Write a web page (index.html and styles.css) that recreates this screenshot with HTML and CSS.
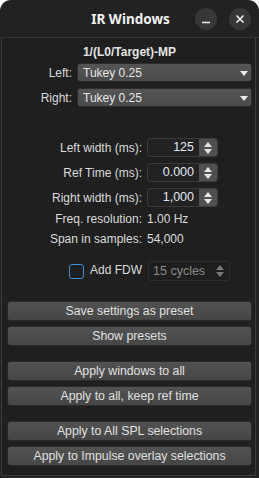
FILE: index.html
```html
<!DOCTYPE html>
<html lang="en">
<head>
  <meta charset="UTF-8">
  <title>IR Windows</title>
  <link rel="stylesheet" href="styles.css">
</head>
<body>
  <div class="window">
    <div class="titlebar">
      <span class="title">IR Windows</span>
      <div class="wm-btns">
        <span class="wm-btn"><svg width="10" height="10" viewBox="0 0 10 10"><path d="M1 8.5h8" stroke="#f0f0f0" stroke-width="1.6"/></svg></span>
        <span class="wm-btn"><svg width="10" height="10" viewBox="0 0 10 10"><path d="M1.5 1.5l7 7M8.5 1.5l-7 7" stroke="#f0f0f0" stroke-width="1.6"/></svg></span>
      </div>
    </div>

    <div class="content">
      <div class="heading">1/(L0/Target)-MP</div>

      <div class="sel-row">
        <label>Left:</label>
        <div class="select">Tukey 0.25<span class="caret"></span></div>
      </div>
      <div class="sel-row">
        <label>Right:</label>
        <div class="select">Tukey 0.25<span class="caret"></span></div>
      </div>

      <div class="spin-block">
        <div class="form-row">
          <label>Left width (ms):</label>
          <div class="spin"><span class="val">125</span><span class="arrows"><i class="up"></i><i class="down"></i></span></div>
        </div>
        <div class="form-row">
          <label>Ref Time (ms):</label>
          <div class="spin"><span class="val">0.000</span><span class="arrows"><i class="up"></i><i class="down"></i></span></div>
        </div>
        <div class="form-row">
          <label>Right width (ms):</label>
          <div class="spin"><span class="val">1,000</span><span class="arrows"><i class="up"></i><i class="down"></i></span></div>
        </div>
        <div class="info-row">
          <label>Freq. resolution:</label>
          <span>1.00 Hz</span>
        </div>
        <div class="info-row">
          <label>Span in samples:</label>
          <span>54,000</span>
        </div>
      </div>

      <div class="fdw-row">
        <span class="check"></span>
        <span class="fdw-label">Add FDW</span>
        <div class="spin disabled"><span class="val">15 cycles</span><span class="arrows"><i class="up"></i><i class="down"></i></span></div>
      </div>

      <div class="btn-group">
        <button>Save settings as preset</button>
        <button>Show presets</button>
      </div>
      <div class="btn-group">
        <button>Apply windows to all</button>
        <button>Apply to all, keep ref time</button>
      </div>
      <div class="btn-group">
        <button>Apply to All SPL selections</button>
        <button>Apply to Impulse overlay selections</button>
      </div>
    </div>
  </div>
</body>
</html>
```

FILE: styles.css
```css
:root {
  --bg: #1f1f1f;
  --title-bg: #222222;
  --text: #dcdcdc;
  --btn-top: #525252;
  --btn-bottom: #464646;
  --border: #3a3a3a;
  --field: #222222;
}

* {
  box-sizing: border-box;
}

body {
  margin: 0;
  background-color: #ffffff;
  font-family: 'Liberation Sans', Arial, sans-serif;
  font-size: 12px;
  color: var(--text);
}

.window {
  width: 259px;
  height: 478px;
  background-color: var(--title-bg);
  border-radius: 11px 11px 0 0;
  overflow: hidden;
  display: flex;
  flex-direction: column;
}

.titlebar {
  height: 38px;
  flex: none;
  display: flex;
  align-items: center;
  justify-content: center;
  position: relative;
  border-bottom: 1px solid #343434;
}

.title {
  font-family: 'Noto Sans', sans-serif;
  font-weight: bold;
  font-size: 13.5px;
  color: #f2f2f2;
  margin-left: 2px;
}

.wm-btns {
  position: absolute;
  right: 8px;
  top: 8px;
  display: flex;
  gap: 12px;
}

.wm-btn {
  width: 22px;
  height: 22px;
  border-radius: 50%;
  background-color: #373737;
  display: flex;
  align-items: center;
  justify-content: center;
}

.content {
  flex: 1;
  background-color: var(--bg);
  border: 1px solid #3c3c3c;
  border-top: none;
  margin: 0 3px 2px 1px;
  padding: 0 3px 0 5px;
}

.heading {
  text-align: center;
  font-weight: bold;
  height: 14px;
  line-height: 14px;
  margin-top: 7px;
  color: #e4e4e4;
}

.sel-row {
  display: flex;
  align-items: center;
  margin-top: 4px;
}

.sel-row + .sel-row {
  margin-top: 6px;
}

.sel-row label {
  width: 70px;
  text-align: right;
  padding-right: 5px;
}

.select {
  flex: 1;
  height: 19px;
  line-height: 18px;
  padding-left: 5px;
  background: linear-gradient(#555555, #4b4b4b);
  border: 1px solid #2c2c2c;
  border-radius: 3px;
  color: #e6e6e6;
  position: relative;
}

.caret {
  position: absolute;
  right: 3px;
  top: 7px;
  border-left: 4px solid transparent;
  border-right: 4px solid transparent;
  border-top: 5px solid #e8e8e8;
}

.spin-block {
  margin-top: 31px;
}

.form-row, .info-row {
  display: flex;
  align-items: center;
}

.form-row {
  height: 19px;
  margin-bottom: 6px;
}

.form-row label, .info-row label {
  width: 140px;
  text-align: right;
  padding-right: 5px;
}

.info-row {
  height: 20px;
}

.form-row:nth-child(3) {
  margin-bottom: 2px;
}

.spin {
  width: 71px;
  height: 19px;
  display: flex;
  background-color: var(--field);
  border: 1px solid var(--border);
  border-radius: 3px;
  overflow: hidden;
}

.spin .val {
  flex: 1;
  text-align: right;
  padding-right: 5px;
  line-height: 17px;
  font-size: 12.5px;
  color: #e2e8f2;
}

.arrows {
  width: 18px;
  background-color: #505050;
  display: flex;
  flex-direction: column;
  align-items: center;
  justify-content: center;
  gap: 2px;
}

.arrows i {
  width: 0;
  height: 0;
  border-left: 4px solid transparent;
  border-right: 4px solid transparent;
}

.arrows .up {
  border-bottom: 5px solid #e6e6e6;
}

.arrows .down {
  border-top: 5px solid #e6e6e6;
}

.fdw-row {
  display: flex;
  align-items: center;
  margin-top: 12px;
  height: 20px;
}

.check {
  width: 15px;
  height: 15px;
  border: 1.5px solid #3b8fd6;
  border-radius: 3px;
  margin-left: 62px;
}

.fdw-label {
  margin-left: 6px;
  width: 58px;
  font-size: 12px;
  margin-top: -2px;
}

.spin.disabled {
  width: 82px;
  height: 20px;
  background-color: #1e1e1e;
  border-color: #2e2e2e;
}

.spin.disabled .val {
  text-align: left;
  padding-left: 4px;
  line-height: 18px;
  color: #8a8a8a;
}

.spin.disabled .arrows {
  background-color: transparent;
}

.spin.disabled .arrows .up {
  border-bottom-color: #7a7a7a;
}

.spin.disabled .arrows .down {
  border-top-color: #7a7a7a;
}

.btn-group {
  display: flex;
  flex-direction: column;
  gap: 5px;
  margin-top: 15px;
}

.fdw-row + .btn-group {
  margin-top: 20px;
}

button {
  height: 20px;
  padding: 0;
  font-family: 'Liberation Sans', Arial, sans-serif;
  font-size: 12.3px;
  color: #e0e0e0;
  background: linear-gradient(var(--btn-top), var(--btn-bottom));
  border: 1px solid #2a2a2a;
  border-radius: 3px;
}
```
